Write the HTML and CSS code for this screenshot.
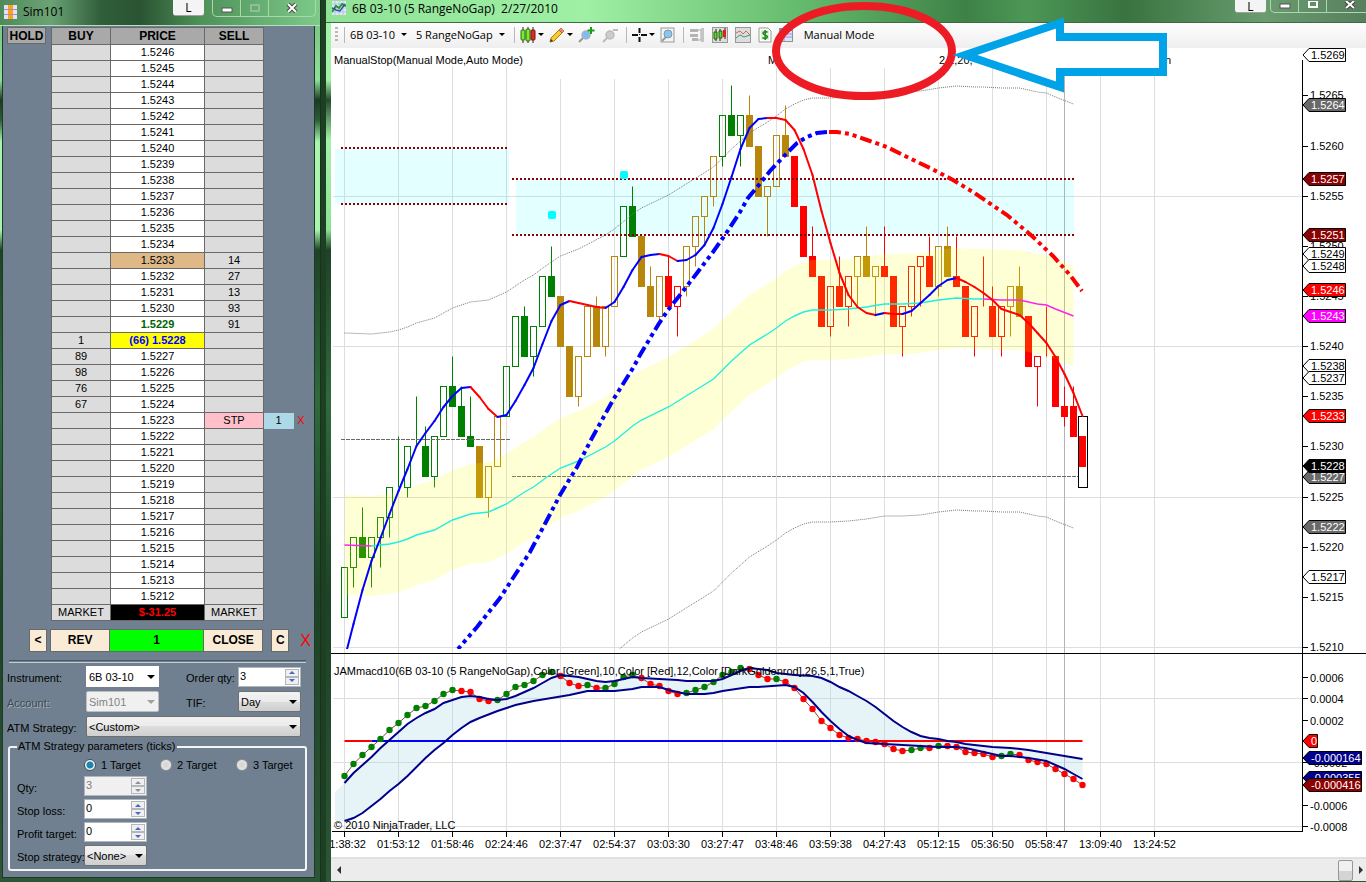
FILE: index.html
```html
<!DOCTYPE html>
<html lang="en">
<head>
    <meta charset="UTF-8">
    <meta name="viewport" content="width=device-width, initial-scale=1.0">
    <title>6B 03-10 (5 RangeNoGap)</title>
    <link rel="stylesheet" href="styles.css">
</head>
<body>
    <div class="window dom">
        <div class="titlebar">
            <svg class="appIcon" width="13" height="14" viewBox="0 0 13 14">
                <rect width="13" height="14" fill="#a090b8"/>
                <path d="M0 0h4v4H0zM0 5h4v4H0zM0 10h4v4H0zM9 0h4v4H9zM9 5h4v4H9zM9 10h4v4H9z" fill="#e4e0f8"/>
                <path d="M4 0h5v4H4zM4 5h5v4H4zM4 10h5v4H4z" fill="#ffa21a"/>
            </svg>
            <span class="title">Sim101</span>
            <button class="linkBtn">L</button>
            <div class="winBtns">
                <button aria-label="Minimize"><svg width="12" height="10"><rect x="1" y="5" width="10" height="4" fill="#fff" stroke="#555"/></svg></button>
                <button aria-label="Maximize" disabled><svg width="12" height="10"><rect x="2" y="2" width="8" height="6" fill="none" stroke="#8fbf98" stroke-width="2"/></svg></button>
                <button aria-label="Close" class="closeBtn"><svg width="12" height="10"><path d="M2 1l8 8M10 1l-8 8" stroke="#444" stroke-width="4"/><path d="M2 1l8 8M10 1l-8 8" stroke="#fff" stroke-width="2"/></svg></button>
            </div>
        </div>

        <div class="panel">
            <div class="ladder">
                <button class="hold">HOLD</button>
                <table>
                    <colgroup><col class="side"><col class="mid"><col class="side"><col class="qty"><col></colgroup>
                    <thead>
                        <tr><th>BUY</th><th>PRICE</th><th>SELL</th></tr>
                    </thead>
                    <tbody id="ladderRows"></tbody>
                </table>
            </div>

            <div class="actions">
                <button class="small">&lt;</button>
                <div class="position">
                    <button>REV</button>
                    <output>1</output>
                    <button>CLOSE</button>
                </div>
                <button class="small">C</button>
                <button class="cancel" aria-label="Cancel all">X</button>
            </div>

            <hr>

            <div class="orderForm">
                <label for="instrument">Instrument:</label>
                <div class="combo flat"><select id="instrument"><option>6B 03-10</option></select></div>
                <label for="orderQty" class="second">Order qty:</label>
                <div class="spin"><input type="text" id="orderQty" value="3"><div class="arrows"><button aria-label="Up"></button><button aria-label="Down"></button></div></div>

                <label for="account" class="dim">Account:</label>
                <div class="combo off"><select id="account" disabled><option>Sim101</option></select></div>
                <label for="tif" class="second">TIF:</label>
                <div class="combo"><select id="tif"><option>Day</option></select></div>

                <label for="atm">ATM Strategy:</label>
                <div class="combo wide"><select id="atm"><option>&lt;Custom&gt;</option></select></div>
            </div>

            <fieldset>
                <legend>ATM Strategy parameters (ticks)</legend>
                <div class="targets">
                    <label><input type="radio" name="target" checked>1 Target</label>
                    <label><input type="radio" name="target">2 Target</label>
                    <label><input type="radio" name="target">3 Target</label>
                </div>
                <div class="params">
                    <label for="qty">Qty:</label>
                    <div class="spin off"><input type="text" id="qty" value="3" disabled><div class="arrows"><button aria-label="Up" disabled></button><button aria-label="Down" disabled></button></div></div>
                    <label for="stopLoss">Stop loss:</label>
                    <div class="spin"><input type="text" id="stopLoss" value="0"><div class="arrows"><button aria-label="Up"></button><button aria-label="Down"></button></div></div>
                    <label for="profit">Profit target:</label>
                    <div class="spin"><input type="text" id="profit" value="0"><div class="arrows"><button aria-label="Up"></button><button aria-label="Down"></button></div></div>
                    <label for="stopStrategy">Stop strategy:</label>
                    <div class="combo"><select id="stopStrategy"><option>&lt;None&gt;</option></select></div>
                </div>
            </fieldset>
        </div>
    </div>

    <div class="window chart">
        <div class="titlebar">
            <svg class="appIcon" width="14" height="14" viewBox="0 0 14 14">
                <rect width="14" height="14" fill="#dfe6f4"/>
                <path d="M3 0v14M7 0v14M11 0v14M0 3h14M0 7h14M0 11h14" stroke="#aab4cc" stroke-width=".6"/>
                <path d="M0 11l4-6 3 2 3-4 4 2" fill="none" stroke="#1c9a2c" stroke-width="2"/>
                <path d="M0 7l4 2 4 1 5-7" fill="none" stroke="#2a50b0" stroke-width="1.5"/>
            </svg>
            <span class="title">6B 03-10 (5 RangeNoGap)&nbsp; 2/27/2010</span>
            <button class="linkBtn">L</button>
            <div class="winBtns">
                <button aria-label="Minimize"><svg width="12" height="10"><rect x="1" y="3" width="10" height="4" fill="#fff" stroke="#555"/></svg></button>
                <button aria-label="Maximize"><svg width="12" height="10"><rect x="2" y="0" width="8" height="6" fill="none" stroke="#fff" stroke-width="2"/></svg></button>
                <button aria-label="Close" class="closeBtn"><svg width="12" height="10"><path d="M2 0l8 7M10 0l-8 7" stroke="#444" stroke-width="4"/><path d="M2 0l8 7M10 0l-8 7" stroke="#fff" stroke-width="2"/></svg></button>
            </div>
        </div>

        <div class="toolbar">
            <span class="grip"></span>
            <span class="sep"></span>
            <button class="menu">6B 03-10</button>
            <button class="menu">5 RangeNoGap</button>
            <span class="sep"></span>
            <button class="menu tool" aria-label="Chart style">
                <svg width="16" height="16" viewBox="0 0 16 16"><path d="M3 0v16M8 0v16M13 0v16" stroke="#222"/><rect x="1" y="3" width="4" height="10" rx="1" fill="#7bea2c" stroke="#2c6a10"/><rect x="6" y="2" width="4" height="12" rx="1" fill="#7bea2c" stroke="#2c6a10"/><rect x="11" y="3" width="4" height="10" rx="1" fill="#e02a2a" stroke="#7a1010"/></svg>
            </button>
            <button class="menu tool" aria-label="Drawing tools">
                <svg width="16" height="16" viewBox="0 0 16 16"><path d="M1 15l1-4 8-8 3 3-8 8z" fill="#f8cc30" stroke="#b07c10"/><path d="M10 3l2-2 3 3-2 2z" fill="#e89070" stroke="#a04020" stroke-width=".6"/><path d="M1 15l1-3 2 2z" fill="#333"/></svg>
            </button>
            <button class="tool" aria-label="Zoom in">
                <svg width="17" height="16" viewBox="0 0 17 16"><path d="M1 15l5-5" stroke="#999" stroke-width="2"/><circle cx="8" cy="8" r="4" fill="#7fbdf0" stroke="#a8b4c0" stroke-width="1.5"/><path d="M13 0v7M9.500 3.500h7" stroke="#16a016" stroke-width="2"/></svg>
            </button>
            <button class="tool" aria-label="Zoom out">
                <svg width="17" height="16" viewBox="0 0 17 16"><path d="M1 15l5-5" stroke="#bbb" stroke-width="2"/><circle cx="8" cy="8" r="4" fill="#ccc" stroke="#bbb" stroke-width="1.500"/><path d="M11 3h5" stroke="#bbb" stroke-width="2"/></svg>
            </button>
            <span class="sep"></span>
            <button class="menu tool" aria-label="Cursor">
                <svg width="15" height="16" viewBox="0 0 15 16"><path d="M7.500 1v5M7.500 10v5M0 8h6M9 8h6" stroke="#111" stroke-width="2"/><path d="M7 7.500h1" stroke="#111"/></svg>
            </button>
            <button class="tool" aria-label="Data box">
                <svg width="16" height="16" viewBox="0 0 16 16"><rect x="1" y="1" width="13" height="14" fill="#f4f4f4" stroke="#999"/><path d="M2 14l4-4" stroke="#999" stroke-width="2"/><circle cx="8" cy="7" r="4" fill="#8cc4ee" stroke="#7a9ab0"/></svg>
            </button>
            <span class="sep"></span>
            <button class="tool" aria-label="Chart trader">
                <svg width="16" height="16" viewBox="0 0 16 16"><path d="M1 2h8v3H1zM1 7h8v3H1zM3 11h6v3H3z" fill="#b4b4b4"/><path d="M9 3h3v10H9" fill="none" stroke="#aaa"/><path d="M13.500 1v14" stroke="#c4c4c4" stroke-width="3"/></svg>
            </button>
            <button class="tool" aria-label="Data series">
                <svg width="16" height="16" viewBox="0 0 16 16"><rect x=".5" y=".5" width="15" height="15" fill="#ddd" stroke="#999"/><path d="M4 2v12M8 2v12M13 1v11" stroke="#222"/><path d="M2 5h3v7H2zM7 4h3v7H7z" fill="#5ed82c" stroke="#226010"/><rect x="11" y="3" width="3" height="7" fill="#e02020"/></svg>
            </button>
            <button class="tool" aria-label="Indicators">
                <svg width="16" height="16" viewBox="0 0 16 16"><rect x=".5" y=".5" width="15" height="15" fill="#ddd" stroke="#999"/><path d="M1 6l4-2 3 3 3-3 4 4" fill="none" stroke="#cc6666"/><path d="M1 11l4-3 4 2 6-2" fill="none" stroke="#3c9c70"/></svg>
            </button>
            <button class="tool" aria-label="Strategies">
                <svg width="14" height="16" viewBox="0 0 14 16"><path d="M1 1h9l3 3v11H1z" fill="#fff" stroke="#999"/><rect x="3" y="3" width="8" height="10" fill="#dff0d8"/><path d="M9.500 5.500C8 4 5 4.500 5 6.200S9.500 8 9.500 9.800 6 12 4.500 10.500M7.200 3v10" fill="none" stroke="#1a8a1a" stroke-width="1.500"/></svg>
            </button>
            <button class="tool" aria-label="Properties">
                <svg width="14" height="16" viewBox="0 0 14 16"><rect x=".5" y="1.500" width="13" height="13" fill="#dfe4f4" stroke="#8a90a8"/><path d="M1 3h12" stroke="#4aa0e0" stroke-width="2"/><path d="M5 4v10M1 7h12M1 10h12" stroke="#a090e0"/></svg>
            </button>
            <button class="mode">Manual Mode</button>
        </div>

        <div class="plotArea">
            <svg id="plot" height="809"></svg>
            <svg id="axis" width="64" height="809"></svg>
        </div>

        <div class="scrollbar">
            <button class="back" aria-label="Scroll left"></button>
            <span class="thumb"></span>
            <button class="forward" aria-label="Scroll right"></button>
        </div>

        <svg class="notes" width="400" height="104" viewBox="0 0 400 104">
            <ellipse cx="94" cy="51" rx="88" ry="45"/>
            <path d="M195 55L290 23V37H393V72H290V87Z"/>
        </svg>
    </div>

    <script src="chart.js"></script>
</body>
</html>
```
FILE: styles.css
```css
body {
    margin: 0;
    font-family: "Liberation Sans", Arial, sans-serif;
    font-size: 11px;
    color: #000000;
    background: #1d3f24;
    display: flex;
    min-height: 100vh;
}

button {
    font: inherit;
    color: inherit;
    margin: 0;
    padding: 0;
    border: none;
    background: none;
}

.window {
    position: relative;
    box-sizing: border-box;
    display: flex;
    flex-direction: column;
}

.dom {
    width: 321px;
    flex: none;
    padding: 0 5px 4px 2px;
    border-right: 1px solid #16321b;
    background: linear-gradient(#72bc7e 0, #8fe09a 80px, #1c3a22 100px, #2c5c36 120px, #a8f5ae 142px, #a8f5ae 230px, #1f4226 250px, #2f6a3c 400px, #1d4225 600px, #2c5636 882px);
}

.chart {
    flex: 1;
    min-width: 0;
    margin-left: 5px;
    padding: 0 0 1px 5px;
    background: linear-gradient(#a4f2aa 0, #a4f2aa 80px, #234a2b 100px, #a4f2aa 140px, #8be294 230px, #1f4226 250px, #2f6a3c 400px, #1d4225 600px, #2c5636 882px);
}

.titlebar {
    display: flex;
    align-items: center;
    font-family: "Open Sans", "Segoe UI", sans-serif;
    font-size: 12px;
}

.dom .titlebar {
    height: 25px;
    margin: 0 -5px 0 -2px;
    padding-left: 4px;
    border-bottom: 1px solid #b5dfba;
    background: linear-gradient(90deg, #4f8a5b 0, #6ca375 50px, #315f3a 100px, #2a5433 140px, #4e9159 200px, #7ecb89 321px);
}

.chart .titlebar {
    height: 22px;
    margin: 0 0 0 -5px;
    padding-left: 6px;
    border-bottom: 1px solid #3e6b46;
    background: linear-gradient(90deg, #8fe296 0, #9ff0a4 260px, #63b96b 480px, #3e8147 640px, #4c9756 700px, #39733f 800px, #6a9c70 940px, #587f5e 1038px);
}

.title {
    margin-left: 6px;
    flex: 1;
    white-space: pre;
}

.dom .appIcon,
.dom .title {
    margin-top: -2px;
}

.chart .appIcon,
.chart .title {
    margin-top: -6px;
}

.linkBtn {
    align-self: flex-start;
    width: 31px;
    height: 16px;
    margin-right: 8px;
    background: #f4f4f4;
    border-bottom: 1px solid #a0a0a0;
    border-radius: 0 0 3px 3px;
    line-height: 15px;
}

.chart .linkBtn {
    height: 13px;
    margin-right: 4px;
    line-height: 9px;
}

.winBtns {
    align-self: flex-start;
    display: flex;
    height: 16px;
    margin-right: 4px;
    border: 1px solid #a9d8ae;
    border-top: none;
    border-radius: 0 0 5px 5px;
}

.chart .winBtns {
    height: 12px;
    margin-right: -8px;
}

.winBtns button {
    width: 28px;
    line-height: 0;
    border-right: 1px solid #a9d8ae;
}

.winBtns .closeBtn {
    width: 46px;
    border-right: none;
}

.panel {
    flex: 1;
    box-sizing: border-box;
    padding: 1px 3px 4px 4px;
    background: #708090;
    border: 1px solid #1d3a24;
    border-top: none;
}

/* price ladder */
.ladder {
    display: flex;
    align-items: flex-start;
    gap: 5px;
}

.hold {
    width: 39px;
    height: 17px;
    border: 1px solid #696969;
    background: #a9a9a9;
    font-size: 12px;
    font-weight: bold;
}

.ladder table {
    border-collapse: collapse;
    table-layout: fixed;
    width: 258px;
}

.ladder .side {
    width: 59px;
}

.ladder .mid {
    width: 94px;
}

.ladder .qty {
    width: 30px;
}

.ladder th,
.ladder td {
    box-sizing: border-box;
    height: 16px;
    padding: 0;
    line-height: 15px;
    text-align: center;
}

.ladder th {
    height: 17px;
    border: 1px solid #696969;
    background: #a9a9a9;
    font-size: 12px;
    line-height: 16px;
}

.ladder td {
    border: 1px solid #696969;
    background: #dcdcdc;
}

.ladder td.price {
    background: #ffffff;
}

.ladder td.high {
    background: #deb887;
}

.ladder td.ask {
    color: #006400;
    font-weight: bold;
}

.ladder td.last {
    background: #ffff00;
    color: #0000ff;
    font-weight: bold;
}

.ladder td.stop {
    background: #ffc0cb;
}

.ladder td.pnl {
    background: #000000;
    color: #ff0000;
    font-weight: bold;
}

.ladder td.stopQty {
    border: none;
    background: #add8e6;
}

.ladder td.stopCancel {
    border: none;
    background: none;
    color: #ff0000;
}

/* position buttons */
.actions {
    display: flex;
    align-items: center;
    margin: 8px 0 0 22px;
    font-size: 12px;
    font-weight: bold;
}

.actions button,
.actions output {
    box-sizing: border-box;
    height: 23px;
    border: 1px solid #696969;
    background: #faebd7;
    text-align: center;
    line-height: 21px;
}

.actions .small {
    width: 19px;
}

.position {
    display: flex;
    margin: 0 8px 0 3px;
}

.position button {
    width: 60px;
}

.position output {
    width: 95px;
    margin: 0 -1px;
    background: #00ff00;
}

.actions .cancel {
    margin-left: 11px;
    border: none;
    background: none;
    color: #ff0000;
    font-size: 16px;
    font-weight: normal;
}

hr {
    height: 1px;
    margin: 8px 5px 3px 2px;
    border: none;
    border-top: 1px solid #4c5862;
    border-bottom: 1px solid #c4ccd2;
}

/* order entry */
.orderForm {
    display: grid;
    grid-template-columns: 79px 73px 79px 63px;
    row-gap: 4px;
    align-items: center;
}

.orderForm .second {
    padding-left: 27px;
}

.orderForm label {
    white-space: nowrap;
    padding-top: 3px;
}

.dim {
    color: #404a54;
    text-shadow: 1px 1px #a9b3bc;
}

.combo {
    position: relative;
    height: 21px;
}

.combo.wide {
    grid-column: 2 / 5;
}

.combo select {
    appearance: none;
    box-sizing: border-box;
    width: 100%;
    height: 21px;
    padding: 0 2px;
    border: 1px solid #707070;
    border-radius: 2px;
    background: linear-gradient(#f2f2f2, #ebebeb 50%, #dddddd 50%, #cfcfcf);
    font: inherit;
    color: #000000;
}

.combo.flat select {
    border-color: #ffffff;
    border-radius: 0;
    background: #ffffff;
}

.combo.off select {
    border-color: #bfbfbf;
    background: #f0f0f0;
    color: #838383;
    opacity: 1;
}

.combo::after {
    content: "";
    position: absolute;
    right: 4px;
    top: 9px;
    border: 4px solid transparent;
    border-top-color: #000000;
    border-bottom: none;
    pointer-events: none;
}

.combo.off::after {
    border-top-color: #a0a0a0;
}

.spin {
    display: flex;
    box-sizing: border-box;
    height: 20px;
    padding: 1px;
    border: 1px solid #b0b6bc;
    background: #ffffff;
}

.spin input {
    flex: 1;
    min-width: 0;
    padding: 0 0 2px;
    border: none;
    background: none;
    font: inherit;
    color: #000000;
}

.arrows {
    display: flex;
    flex-direction: column;
    width: 14px;
}

.arrows button {
    flex: 1;
    display: flex;
    align-items: center;
    justify-content: center;
    border: 1px solid #b4b8bc;
    background: #f0f0f0;
}

.arrows button::before {
    content: "";
    border: 3px solid transparent;
    border-bottom-color: #4a66c4;
    border-top: none;
}

.arrows button:last-child::before {
    border-top: 3px solid #4a66c4;
    border-bottom: none;
}

.spin.off {
    background: #f0f0f0;
}

.spin.off input {
    color: #808080;
}

.arrows button:disabled::before {
    border-bottom-color: #909090;
    border-top-color: #909090;
}

fieldset {
    min-width: 0;
    margin: 3px 4px 0 1px;
    padding: 6px 6px 3px 7px;
    border: 2px solid #f2f4f6;
    border-radius: 3px;
}

legend {
    padding: 0 1px;
    line-height: 13px;
}

.targets {
    display: grid;
    grid-template-columns: 76px 76px 1fr;
    padding-left: 67px;
    margin-bottom: 5px;
}

.targets label {
    display: flex;
    align-items: center;
    gap: 5px;
    white-space: nowrap;
}

.targets input {
    appearance: none;
    box-sizing: border-box;
    width: 12px;
    height: 12px;
    margin: 0;
    border: 1px solid #8e8f8f;
    border-radius: 50%;
    background: radial-gradient(#d8d8d8 30%, #f4f4f4);
}

.targets input:checked {
    background: radial-gradient(#1c84b0 0 3px, #f4f4f4 4px);
    border-color: #44545e;
}

.params {
    display: grid;
    grid-template-columns: 67px 63px;
    row-gap: 3px;
    align-items: center;
}

.params label {
    white-space: nowrap;
    padding-top: 3px;
}

/* chart window */
.toolbar {
    display: flex;
    align-items: center;
    box-sizing: border-box;
    height: 25px;
    padding: 0 0 2px 4px;
    background: linear-gradient(#fdfdfd, #efefef);
    font-family: "Open Sans", "Segoe UI", sans-serif;
    font-size: 11px;
}

.grip {
    width: 3px;
    height: 16px;
    margin-right: 6px;
    background: repeating-linear-gradient(#b8b8b8 0 2px, transparent 2px 4px);
}

.sep {
    width: 1px;
    height: 16px;
    margin-right: 5px;
    background: #b8b8b8;
}

.menu {
    display: flex;
    align-items: center;
    gap: 6px;
    margin-right: 9px;
    white-space: nowrap;
}

.menu::after {
    content: "";
    border: 3px solid transparent;
    border-top-color: #000000;
    border-bottom: none;
}

.tool {
    margin-right: 7px;
    line-height: 0;
}

.menu.tool {
    gap: 2px;
    margin-right: 5px;
}

.mode {
    margin-left: 4px;
}

.plotArea {
    display: flex;
    background: #ffffff;
}

#plot {
    flex: 1;
    min-width: 0;
    overflow: hidden;
}

#axis {
    flex: none;
}

.plotArea text {
    font-family: "Liberation Sans", Arial, sans-serif;
    font-size: 11px;
}

.scrollbar {
    flex: 1;
    display: flex;
    align-items: center;
    justify-content: flex-end;
    min-height: 22px;
    padding: 0 3px 0 6px;
    box-sizing: border-box;
    border-top: 2px solid #e0e0e0;
    background: #ececec;
}

.scrollbar button {
    width: 0;
    height: 0;
    border: 4px solid transparent;
}

.scrollbar .back {
    margin-right: auto;
    border-left: none;
    border-right-color: #303030;
}

.scrollbar .forward {
    border-right: none;
    border-left-color: #303030;
}

.thumb {
    width: 13px;
    height: 19px;
    margin-right: 6px;
    border: 1px solid #979797;
    border-radius: 2px;
    background: linear-gradient(#f0f0f0 50%, #d4d4d4 50%);
}

/* pointer drawn over the mode button */
.notes {
    position: absolute;
    left: 444px;
    top: 0;
    pointer-events: none;
}

.notes ellipse {
    fill: none;
    stroke: #ed1c24;
    stroke-width: 8;
}

.notes path {
    fill: #ffffff;
    stroke: #00a2e8;
    stroke-width: 8;
}
```
FILE: chart.js
```js
// ---- price ladder ----
const buys = { 5228: 1, 5227: 89, 5226: 98, 5225: 76, 5224: 67 };
const sells = { 5233: 14, 5232: 27, 5231: 13, 5230: 93, 5229: 91 };
const priceClass = { 5233: 'high', 5229: 'ask', 5228: 'last' };

let rows = '';
for (let p = 5246; p >= 5212; p--) {
    const text = (p === 5228 ? '(66) ' : '') + '1.' + p;
    const stop = p === 5223;
    rows += `<tr><td>${buys[p] || ''}</td>
        <td class="price ${priceClass[p] || ''}">${text}</td>
        <td class="${stop ? 'stop' : ''}">${stop ? 'STP' : sells[p] || ''}</td>
        ${stop ? '<td class="stopQty">1</td><td class="stopCancel">X</td>' : ''}</tr>`;
}
rows += '<tr><td>MARKET</td><td class="price pnl">$-31.25</td><td>MARKET</td></tr>';
document.getElementById('ladderRows').innerHTML = rows;

// ---- chart ----
const green = '#008000', gold = '#b8860b', red = '#ff0000';
const colors = { g: green, d: gold, r: red };
const X = i => 13.5 + i * 9;
const Y = p => Math.round(599 - (p - 5210) * 10.03) + 0.5;
const line = (x1, y1, x2, y2, attrs) => `<line x1="${x1}" y1="${y1}" x2="${x2}" y2="${y2}" ${attrs}/>`;
const poly = (pts, attrs) => `<polyline points="${pts.map(p => p.join(',')).join(' ')}" fill="none" ${attrs}/>`;
const byBar = (pts, dy = 0) => pts.map(([i, y]) => [X(i), y + dy]);

// color + fill (f = solid, h = hollow), top, bottom, high, low
const bars = [
    ['gh', 5218, 5213], ['gh', 5221, 5218, 0, 5216], ['gf', 5221, 5219, 5224], ['gh', 5221, 5219, 0, 5216],
    ['gh', 5223, 5221, 0, 5218], ['gh', 5226, 5223, 0, 5221], ['gh', 5226, 5226, 5231], ['gh', 5230, 5226, 0, 5225],
    ['gh', 5230, 5230, 5235], ['gf', 5230, 5227, 5232], ['gh', 5231, 5227, 0, 5226], ['gh', 5236, 5231],
    ['gf', 5236, 5234, 5239], ['gf', 5234, 5231, 5236], ['gf', 5231, 5230, 5235], ['df', 5230, 5225],
    ['dh', 5228, 5225, 0, 5223], ['dh', 5233, 5228], ['gh', 5238, 5233], ['gh', 5243, 5238],
    ['gf', 5243, 5239, 5244], ['gh', 5242, 5239, 0, 5237], ['gh', 5247, 5242], ['gf', 5247, 5245, 5250],
    ['df', 5245, 5240], ['df', 5240, 5235], ['dh', 5239, 5235, 0, 5234], ['dh', 5244, 5239],
    ['df', 5244, 5240, 5245], ['dh', 5244, 5240, 0, 5239], ['dh', 5249, 5244], ['gh', 5254, 5249],
    ['gf', 5254, 5251, 5256], ['df', 5251, 5246], ['df', 5246, 5243, 5248], ['dh', 5247, 5243, 0, 5242],
    ['rf', 5247, 5244, 5249], ['rh', 5246, 5244, 0, 5241], ['dh', 5250, 5246, 0, 5245], ['dh', 5253, 5250, 0, 5248],
    ['dh', 5255, 5253, 0, 5250], ['dh', 5259, 5255, 0, 5254], ['gh', 5263, 5259, 0, 5258], ['gf', 5263, 5261, 5266],
    ['gh', 5263, 5261, 0, 5258], ['df', 5263, 5260, 5265], ['df', 5260, 5255], ['dh', 5256, 5255, 0, 5251],
    ['dh', 5261, 5256], ['df', 5261, 5259, 5264], ['rf', 5259, 5254], ['rf', 5254, 5249],
    ['rf', 5249, 5247, 5252], ['rf', 5247, 5242], ['rh', 5246, 5242, 0, 5241], ['rf', 5246, 5244, 5249],
    ['rh', 5247, 5244, 0, 5242], ['dh', 5249, 5247, 0, 5244], ['df', 5249, 5247, 5252], ['dh', 5248, 5247, 0, 5243],
    ['rf', 5248, 5247, 5252], ['rf', 5247, 5242], ['rh', 5244, 5242, 0, 5239], ['rh', 5248, 5244, 0, 5243],
    ['rh', 5249, 5248, 0, 5244], ['rf', 5249, 5246, 5251], ['dh', 5250, 5246, 0, 5245], ['df', 5250, 5247, 5252],
    ['rf', 5247, 5246, 5251], ['rf', 5246, 5241], ['rh', 5244, 5241, 0, 5239], ['rh', 5244, 5244, 5249],
    ['rf', 5244, 5241, 5246], ['rh', 5244, 5241, 0, 5239], ['dh', 5246, 5244, 0, 5241], ['df', 5246, 5243, 5248],
    ['rf', 5243, 5238], ['rh', 5239, 5238, 0, 5234], ['rh', 5239, 5239, 5244], ['rf', 5239, 5234],
    ['rf', 5234, 5233, 5236, 5232], ['rf', 5234, 5231, 5236], ['rf', 5231, 5228]
];

const fastMa = [
    611, 576, 542, 513, 490, 466, 443, 421, 398, 385, 373, 359, 348, 340, 339, 349, 361, 369, 367, 353, 337,
    320, 296, 273, 257, 253, 255, 257, 259, 260, 254, 239, 222, 209, 207, 206, 208, 213, 212, 207, 197, 180,
    156, 129, 101, 80, 71, 70, 70, 72, 82, 101, 127, 163, 195, 225, 247, 259, 265, 267, 265, 266, 266, 263,
    255, 247, 238, 232, 230, 234, 239, 245, 252, 261, 264, 267, 275, 285, 295, 309, 326, 345, 368
];

const mid = [
    [0, 497], [3, 498], [5, 496], [6, 494], [7, 491], [8, 487], [10, 482], [12, 472], [14, 466], [16, 464],
    [17, 460], [18, 456], [20, 444], [21, 439], [22.5, 429], [24, 420], [26, 413], [29, 399], [30, 393],
    [32, 378], [33, 372], [36, 359], [41, 331], [43, 313], [45, 297], [47, 286], [48, 280], [49, 273],
    [50, 268], [51, 264], [52, 262], [54, 262], [56, 261], [58, 259], [60, 256], [62, 256], [64, 255],
    [66, 252], [68, 250], [70, 251], [71, 251], [73, 252], [75, 252], [77, 256], [78, 257], [79, 261], [81, 268]
];

const slowUp = [
    [127, 601], [146, 579], [169, 550], [182, 530], [199, 504], [216, 472], [229, 447], [246, 419], [261, 390],
    [282, 352], [302, 320], [309, 307], [327, 277], [337, 262], [349, 247], [366, 225], [382, 204], [396, 184],
    [409, 164], [417, 150], [427, 138], [439, 123], [456, 105], [466, 95], [476, 89], [486, 85], [496, 84]
];
const slowDown = [
    [498, 84], [506, 84], [519, 86], [536, 92], [556, 99], [576, 109], [599, 120], [622, 132], [642, 144],
    [667, 161], [676, 167], [701, 188], [722, 208], [739, 227], [751, 243]
];

const macd = [
    728, 716, 707, 699, 691, 682, 675, 667, 660, 658, 653, 646, 642, 643, 644, 651, 653, 652, 646, 639, 637,
    633, 627, 624, 628, 635, 638, 637, 640, 640, 636, 629, 627, 630, 636, 638, 643, 646, 645, 642, 639, 634,
    627, 624, 620, 621, 627, 631, 631, 634, 640, 651, 661, 673, 680, 687, 690, 691, 693, 694, 696, 701, 703,
    702, 700, 700, 698, 698, 699, 704, 705, 706, 709, 708, 706, 707, 712, 714, 716, 721, 726, 731, 737
];
const macdColors = 'gggggggggggggrrrrgggggggrrrgrggggrrrrrgggggggrrrgrrrrrrrrrrrrrrggrgrrrrrrggrrrrrrrr';

const bandA = [
    [0, 735], [1, 725], [2, 717], [3, 709], [4, 700], [5, 692], [6, 684], [7, 676], [8, 670], [9, 665],
    [10, 661], [11, 655], [12, 652], [13, 649], [14, 648], [15, 649], [16, 651], [17, 652], [18, 651],
    [19, 648], [20, 644], [21, 640], [22, 635], [23, 630], [24, 627], [25, 628], [26, 629], [27, 631],
    [28, 633], [29, 634], [30, 633], [31, 631], [32, 629], [33, 630], [35, 631], [37, 632], [38, 633],
    [41, 633], [42, 631], [43, 627], [44, 623], [45, 620], [46, 621], [47, 622], [48, 625], [50, 627],
    [52, 628], [53, 630], [54, 634], [55, 639], [56, 643], [57, 648], [58, 653], [59, 659], [60, 666],
    [61, 673], [62, 679], [63, 684], [64, 688], [65, 690], [66, 691], [67, 693], [68, 694], [69, 696],
    [70, 697], [71, 698], [72, 699], [74, 700], [76, 702], [78, 705], [80, 708], [82, 711]
];
const bandB = [
    [0, 773], [1, 770], [2, 765], [3, 758], [4, 751], [5, 743], [6, 736], [7, 728], [8, 719], [9, 710],
    [10, 702], [11, 695], [12, 687], [13, 680], [14, 674], [15, 670], [17, 663], [19, 657], [20, 655],
    [21, 653], [23, 650], [25, 647], [27, 643], [30, 643], [31, 642], [32, 641], [33, 639], [35, 639],
    [36, 642], [37, 644], [38, 646], [40, 646], [41, 645], [42, 643], [45, 639], [46, 639], [49, 637],
    [50, 639], [51, 645], [52, 654], [53, 664], [54, 673], [55, 681], [56, 688], [57, 692], [58, 695],
    [60, 696], [62, 697], [64, 698], [66, 699], [68, 699], [69, 700], [70, 702], [72, 706], [73, 708],
    [74, 708], [76, 710], [78, 713], [80, 721], [81, 726], [82, 731]
];

const times = [
    '01:38:32', '01:53:12', '01:58:46', '02:24:46', '02:37:47', '02:54:37', '03:03:30', '03:27:47',
    '03:48:46', '03:59:38', '04:27:43', '05:12:15', '05:36:50', '05:58:47', '13:09:40', '13:24:52'
];

const drawPlot = () => {
    let s = '<defs><clipPath id="price"><rect width="100%" height="601"/></clipPath></defs>';

    // grid
    const grid = 'stroke="#dedede"';
    times.forEach((t, n) => {
        const x = X(n * 6);
        s += line(x, n < 4 ? 18 : n < 8 ? 31 : 20, x, 783, grid);
    });
    [5255, 5240, 5225, 5210].forEach(p => s += line(2, Y(p), '100%', Y(p), grid));
    [650.5, 714.5, 778.5].forEach(y => s += line(2, y, '100%', y, grid));
    s += line(X(80), 20, X(80), 783, 'stroke="#b4b4b4"');

    // zone fills sit under the candles
    s += '<g fill="#00ffff" fill-opacity=".11"><rect x="4" y="101" width="174" height="55"/><rect x="185" y="131" width="558" height="56"/></g>';

    // candles
    bars.forEach(([type, top, bottom, high, low], i) => {
        const c = colors[type[0]];
        const x = X(i), t = Y(top), b = Y(bottom);
        if (high) s += line(x, Y(high), x, t, `stroke="${c}"`);
        if (low) s += line(x, b, x, Y(low), `stroke="${c}"`);
        s += `<rect x="${x - 3}" y="${t}" width="6" height="${b - t}" stroke="${c}" fill="${type[1] === 'f' ? c : 'none'}"/>`;
    });
    s += `<rect x="${X(82) - 4}" y="${Y(5233)}" width="9" height="${Y(5226) - Y(5233)}" fill="none" stroke="#000"/>`;

    // pivot lines
    const dots = 'stroke="#8b0000" stroke-width="2" stroke-dasharray="2 2"';
    s += line(10, 100, 178, 100, dots) + line(10, 156, 178, 156, dots);
    s += line(181, 131, 745, 131, dots) + line(181, 187, 745, 187, dots);
    const dash = 'stroke="#696969" stroke-dasharray="4 1"';
    s += line(10, 391.5, 179, 391.5, dash) + line(181, 428.5, 747, 428.5, dash);
    s += '<g fill="#00ffff"><rect x="217" y="163" width="8" height="8" rx="2"/><rect x="289" y="123" width="8" height="8" rx="2"/></g>';

    // bands and averages
    s += '<g clip-path="url(#price)">';
    const band = byBar(mid, -50).concat(byBar(mid, 50).reverse());
    s += `<polygon points="${band.join(' ')}" fill="#ffff00" fill-opacity=".16"/>`;
    s += poly(byBar(mid, -212), 'stroke="#777" stroke-dasharray="1 1"');
    s += poly(byBar(mid, 212), 'stroke="#777" stroke-dasharray="1 1"');
    s += poly(byBar(mid.slice(0, 2)), 'stroke="#ff22ee" stroke-width="1.4"');
    s += poly(byBar(mid.slice(1, 41)), 'stroke="#22eee0" stroke-width="1.4"');
    s += poly(byBar(mid.slice(40)), 'stroke="#ff22ee" stroke-width="1.4"');
    for (let i = 1; i < fastMa.length; i++) {
        const c = fastMa[i] < fastMa[i - 1] ? '#0000ff' : red;
        s += line(X(i - 1), fastMa[i - 1], X(i), fastMa[i], `stroke="${c}" stroke-width="2" stroke-linecap="round"`);
    }
    const dashDot = 'stroke-width="4" stroke-dasharray="12 4 4 4 4 4"';
    s += poly(slowUp, `stroke="#0000ff" stroke-dashoffset="8" ${dashDot}`) + poly(slowDown, `stroke="${red}" ${dashDot}`);
    s += '</g>';

    // macd panel
    const area = [[4, 744]].concat(byBar(bandA), byBar(bandB).reverse(), [[4, 773]]);
    s += `<polygon points="${area.join(' ')}" fill="#add8e6" fill-opacity=".3"/>`;
    [[0, 3, red], [3, 57.5, '#0000ff'], [57.5, 82, red]].forEach(([a, b, c]) => {
        s += line(X(a), 693, X(b), 693, `stroke="${c}" stroke-width="2"`);
    });
    s += poly(macd.map((y, i) => [X(i), y]), 'stroke="#8b4040"');
    macd.forEach((y, i) => s += `<circle cx="${X(i)}" cy="${y}" r="3.2" fill="${colors[macdColors[i]]}"/>`);
    s += poly(byBar(bandA), 'stroke="#00008b" stroke-width="2"') + poly(byBar(bandB), 'stroke="#00008b" stroke-width="2"');

    // frame and captions
    s += line(0, 605.5, '100%', 605.5, 'stroke="#000"') + line(1, 783.5, '100%', 783.5, 'stroke="#000"');
    times.forEach((t, n) => {
        s += line(X(n * 6), 783, X(n * 6), 789, 'stroke="#000"');
        s += `<text x="${X(n * 6)}" y="800" text-anchor="middle">${t}</text>`;
    });
    s += '<text x="3" y="16">ManualStop(Manual Mode,Auto Mode)</text>';
    s += '<text x="437" y="16">M</text><text x="608" y="16">2,1,20,</text><text x="834" y="16">n</text>';
    s += '<text x="3" y="627">JAMmacd10(6B 03-10 (5 RangeNoGap),Color [Green],10,Color [Red],12,Color [DarkGoldenrod],26,5,1,True)</text>';
    s += '<text x="3" y="781">© 2010 NinjaTrader, LLC</text>';
    document.getElementById('plot').innerHTML = s;
};

const tag = (y, text, fill, width = 43) => {
    const color = fill === '#fff' ? '#000' : '#fff';
    return `<polygon points="1,${y} 7,${y - 6.5} ${width + 0.5},${y - 6.5} ${width + 0.5},${y + 6.5} 7,${y + 6.5}" fill="${fill}" stroke="#000"/>
        <text x="9" y="${y + 4}" fill="${color}">${text}</text>`;
};

const drawAxis = () => {
    let s = line(0.5, 12, 0.5, 784, 'stroke="#000"') + line(0, 605.5, 64, 605.5, 'stroke="#000"');
    for (let p = 5210; p <= 5265; p += 5) {
        s += line(0, Y(p), 6, Y(p), 'stroke="#000"') + `<text x="8" y="${Y(p) + 3.5}">1.${p}</text>`;
    }
    [[630, '0.0006'], [651, '0.0004'], [673, '0.0002'], [715, '-0.0002'], [758, '-0.0006'], [779, '-0.0008']].forEach(([y, t]) => {
        s += line(0, y - 0.5, 6, y - 0.5, 'stroke="#000"') + `<text x="8" y="${y + 4}">${t}</text>`;
    });
    [
        [7, 5269, '#fff'], [57, 5264, '#696969'], [131, 5257, '#8b0000'], [187, 5251, '#8b0000'],
        [206, 5249, '#fff'], [218, 5248, '#fff'], [242, 5246, red], [268, 5243, '#ff00ff'],
        [318, 5238, '#fff'], [330, 5237, '#fff'], [368, 5233, red], [429, 5227, '#696969'],
        [418, 5228, '#000'], [479, 5222, '#696969'], [529, 5217, '#fff']
    ].forEach(([y, p, fill]) => s += tag(y, '1.' + p, fill));
    s += tag(693, '0', red, 15) + tag(710, '-0.000164', '#00008b', 59);
    s += tag(730, '-0.000355', '#00008b', 59) + tag(737, '-0.000416', '#8b0000', 59);
    document.getElementById('axis').innerHTML = s;
};

drawPlot();
drawAxis();
```
